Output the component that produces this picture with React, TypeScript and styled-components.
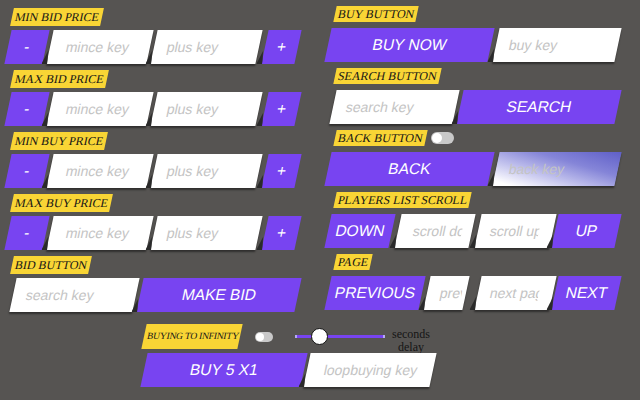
import styled, { createGlobalStyle, css } from "styled-components";

const PURPLE = "#7844f1";
const YELLOW = "#f9d535";

const GlobalStyle = createGlobalStyle`
  html, body { margin: 0; padding: 0; background: #565452; }
  body {
    width: 640px;
    height: 400px;
    overflow: hidden;
    font-family: "Liberation Sans", Arial, sans-serif;
  }
  * { box-sizing: border-box; }
`;

const Page = styled.div`
  width: 640px;
  height: 400px;
  padding: 6px 0 0 8px;
  display: flex;
  flex-direction: column;
`;

const Columns = styled.div`
  display: flex;
  gap: 30px;
`;

const Column = styled.div<{ $top: number }>`
  width: 290px;
  display: flex;
  flex-direction: column;
  gap: 6px;
  padding-top: ${(p) => p.$top}px;
`;

const Section = styled.div<{ $labelGap: number }>`
  display: flex;
  flex-direction: column;
  gap: ${(p) => p.$labelGap}px;
`;

const LabelLine = styled.div`
  display: flex;
  align-items: center;
  gap: 5px;
`;

const Label = styled.div<{ $h: number; $ml?: number; $size?: number; $w?: number }>`
  align-self: flex-start;
  height: ${(p) => p.$h}px;
  width: ${(p) => (p.$w ? `${p.$w}px` : "auto")};
  margin-left: ${(p) => p.$ml ?? 0}px;
  padding: 0 3px;
  background: ${YELLOW};
  transform: skewX(-12deg);
  font-family: "Liberation Serif", "Times New Roman", serif;
  font-size: ${(p) => p.$size ?? 12}px;
  line-height: ${(p) => p.$h}px;
  letter-spacing: ${(p) => ((p.$size ?? 12) < 10 ? "-0.2px" : "0")};
  text-align: center;
  color: #161616;
  white-space: nowrap;
`;

const Row = styled.div`
  display: flex;
  height: 34px;
`;

const item = css<{ $w: number; $gap?: number }>`
  position: relative;
  flex: 0 0 ${(p) => p.$w}px;
  width: ${(p) => p.$w}px;
  height: 100%;
  margin: 0 0 0 ${(p) => p.$gap ?? 0}px;
  transform: skewX(-12deg);
  border: none;
  outline: none;

  &:not(:first-child)::before {
    content: "";
    position: absolute;
    left: -5px;
    bottom: 0;
    width: 6px;
    height: 13px;
    background: #2a2a2a;
    clip-path: polygon(0 100%, 65% 0, 100% 100%);
  }
`;

const Button = styled.button<{ $w: number; $gap?: number }>`
  ${item}
  padding: 0;
  background: ${PURPLE};
  color: #fff;
  font-family: "Liberation Sans", Arial, sans-serif;
  font-size: 15.5px;
  text-align: center;
  cursor: pointer;
`;

const Field = styled.label<{ $w: number; $gap?: number; $focus?: boolean }>`
  ${item}
  display: block;
  background: ${(p) =>
    p.$focus
      ? "linear-gradient(to bottom left, #5f5fc8 0%, #8585d8 35%, #c4c4ee 65%, #ffffff 92%)"
      : "#ffffff"};
  box-shadow: 0 2px 2px rgba(0, 0, 0, 0.45);
`;

const FieldInput = styled.input<{ $pad?: number; $padR?: number }>`
  width: 100%;
  height: 100%;
  border: none;
  outline: none;
  background: transparent;
  padding: 0 ${(p) => p.$padR ?? 13}px 0 ${(p) => p.$pad ?? 14}px;
  font-family: "Liberation Sans", Arial, sans-serif;
  font-size: 14px;
  color: #333;

  &::placeholder {
    color: #c4c4c4;
  }
`;

const Toggle = styled.span<{ $w: number; $h: number; $ml?: number }>`
  position: relative;
  display: inline-block;
  flex: 0 0 auto;
  width: ${(p) => p.$w}px;
  height: ${(p) => p.$h}px;
  margin-left: ${(p) => p.$ml ?? 0}px;
  border-radius: ${(p) => p.$h / 2}px;
  background: #c9c9c9;

  &::after {
    content: "";
    position: absolute;
    left: 1px;
    top: 1px;
    width: ${(p) => p.$h - 2}px;
    height: ${(p) => p.$h - 2}px;
    border-radius: 50%;
    background: #fff;
  }
`;

const Slider = styled.div`
  position: relative;
  width: 90px;
  height: 3px;
  margin-left: 22px;
  background: ${PURPLE};
  border-left: 2px solid #b4aaf4;
  border-right: 2px solid #b4aaf4;
`;

const Thumb = styled.span<{ $pos: number }>`
  position: absolute;
  top: 50%;
  left: ${(p) => p.$pos}px;
  width: 17px;
  height: 17px;
  margin-top: -8.5px;
  border-radius: 50%;
  background: #fff;
  border: 1px solid #111;
`;

const DelayNote = styled.div`
  margin: 8px 0 0 7px;
  font-family: "Liberation Serif", "Times New Roman", serif;
  font-size: 12px;
  line-height: 13px;
  color: #151515;
  text-align: center;
`;

const Bottom = styled.div`
  margin: 12px 0 0 136px;
  display: flex;
  flex-direction: column;
  gap: 4px;
`;

const ControlLine = styled.div`
  display: flex;
  align-items: center;
  height: 25px;
`;

type PriceProps = { title: string };

const PriceBlock = ({ title }: PriceProps) => (
  <Section $labelGap={4}>
    <Label $h={18} $ml={4}>
      {title}
    </Label>
    <Row>
      <Button $w={38}>-</Button>
      <Field $w={100} $gap={4}>
        <FieldInput placeholder="mince key" $pad={16} />
      </Field>
      <Field $w={105} $gap={4}>
        <FieldInput placeholder="plus key" $pad={13} />
      </Field>
      <Button $w={33} $gap={6}>
        +
      </Button>
    </Row>
  </Section>
);

export default function App() {
  return (
    <>
      <GlobalStyle />
      <Page>
        <Columns>
          <Column $top={2}>
            <PriceBlock title="MIN BID PRICE" />
            <PriceBlock title="MAX BID PRICE" />
            <PriceBlock title="MIN BUY PRICE" />
            <PriceBlock title="MAX BUY PRICE" />
            <Section $labelGap={4}>
              <Label $h={18} $ml={4}>
                BID BUTTON
              </Label>
              <Row>
                <Field $w={123} $gap={5}>
                  <FieldInput placeholder="search key" $pad={13} />
                </Field>
                <Button $w={158} $gap={4}>
                  MAKE BID
                </Button>
              </Row>
            </Section>
          </Column>

          <Column $top={0}>
            <Section $labelGap={6}>
              <Label $h={16} $ml={7}>
                BUY BUTTON
              </Label>
              <Row>
                <Button $w={163}>BUY NOW</Button>
                <Field $w={122} $gap={5}>
                  <FieldInput placeholder="buy key" $pad={13} />
                </Field>
              </Row>
            </Section>
            <Section $labelGap={6}>
              <Label $h={16} $ml={7}>
                SEARCH BUTTON
              </Label>
              <Row>
                <Field $w={123} $gap={5}>
                  <FieldInput placeholder="search key" $pad={13} />
                </Field>
                <Button $w={158} $gap={4}>
                  SEARCH
                </Button>
              </Row>
            </Section>
            <Section $labelGap={6}>
              <LabelLine>
                <Label $h={16} $ml={7}>
                  BACK BUTTON
                </Label>
                <Toggle $w={23} $h={12} />
              </LabelLine>
              <Row>
                <Button $w={163}>BACK</Button>
                <Field $w={122} $gap={5} $focus>
                  <FieldInput placeholder="back key" $pad={13} />
                </Field>
              </Row>
            </Section>
            <Section $labelGap={6}>
              <Label $h={16} $ml={7}>
                PLAYERS LIST SCROLL
              </Label>
              <Row>
                <Button $w={64}>DOWN</Button>
                <Field $w={74} $gap={6}>
                  <FieldInput placeholder="scroll down key" $pad={15} $padR={10} />
                </Field>
                <Field $w={75} $gap={6}>
                  <FieldInput placeholder="scroll up key" $pad={12} $padR={14} />
                </Field>
                <Button $w={63} $gap={2}>
                  UP
                </Button>
              </Row>
            </Section>
            <Section $labelGap={6}>
              <Label $h={16} $ml={7}>
                PAGE
              </Label>
              <Row>
                <Button $w={94}>PREVIOUS</Button>
                <Field $w={39} $gap={5}>
                  <FieldInput placeholder="previous page key" $pad={13} $padR={4} />
                </Field>
                <Field $w={75} $gap={12}>
                  <FieldInput placeholder="next page key" $pad={12} $padR={14} />
                </Field>
                <Button $w={63} $gap={2}>
                  NEXT
                </Button>
              </Row>
            </Section>
          </Column>
        </Columns>

        <Bottom>
          <ControlLine>
            <Label $h={25} $w={96} $size={9.5}>
              BUYING TO INFINITY
            </Label>
            <Toggle $w={18} $h={10} $ml={15} />
            <Slider>
              <Thumb $pos={14} />
            </Slider>
            <DelayNote>
              seconds
              <br />
              delay
            </DelayNote>
          </ControlLine>
          <Row>
            <Button $w={160}>BUY 5 X1</Button>
            <Field $w={126} $gap={3}>
              <FieldInput placeholder="loopbuying key" $pad={17} />
            </Field>
          </Row>
        </Bottom>
      </Page>
    </>
  );
}
